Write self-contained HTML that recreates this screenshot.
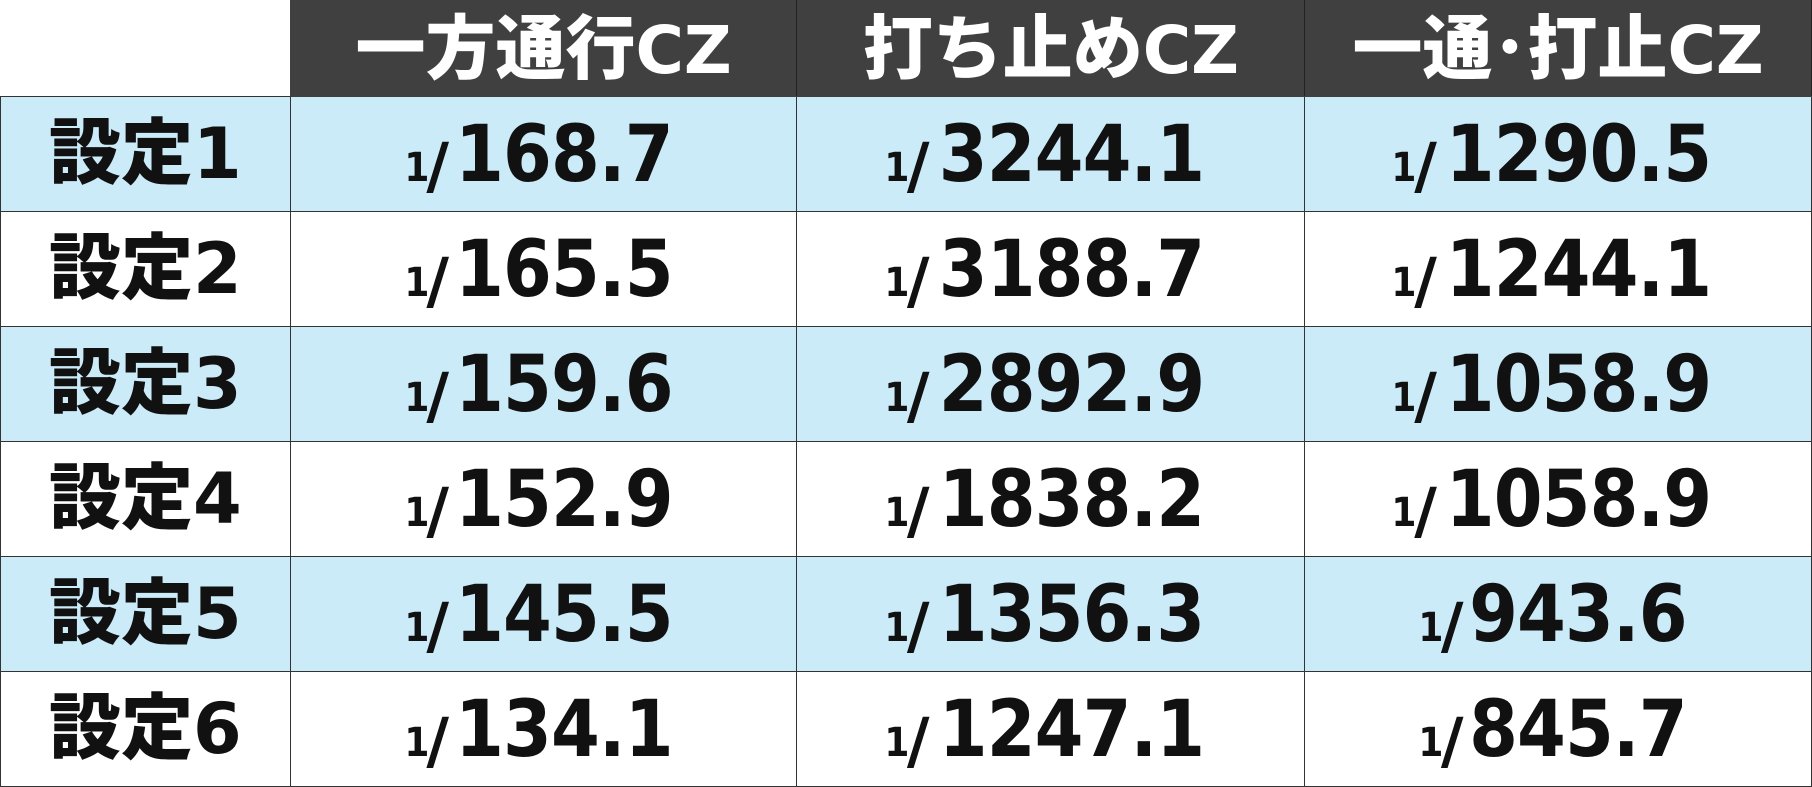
<!DOCTYPE html>
<html><head><meta charset="utf-8"><style>
body{margin:0;width:1812px;height:784px;background:#fff;overflow:hidden}
table{border-collapse:collapse;table-layout:fixed;position:absolute;left:0;top:0}
td{padding:0;text-align:center;vertical-align:middle;border:1px solid #333;line-height:1;overflow:hidden}
.h{background:#404040;color:#fff;font:900 70px/1 "Liberation Sans","Noto Sans CJK JP",sans-serif;height:95px;border-color:#404040;border-right:1px solid #222;white-space:nowrap}
.h b{font-family:"DejaVu Sans",sans-serif;font-weight:bold;font-size:66px}
.l{font:900 72px/1 "Liberation Sans","Noto Sans CJK JP",sans-serif;color:#111;white-space:nowrap}
.l b{font-family:"DejaVu Sans",sans-serif;font-size:70px}
.b td{background:#cbebf9}
.n{font-family:"DejaVu Sans",sans-serif;font-weight:bold;color:#111;white-space:nowrap}
.n div{transform:translateY(1px)}
.n span{display:inline-block;transform:scaleX(0.9);font-size:78px;letter-spacing:-1px;margin-left:-6px}
.n small{font-size:40px;display:inline-block;transform:scaleX(0.9)}
.n i{font-style:normal;font-size:62px;font-weight:bold;margin-left:-4px;display:inline-block;transform:translateY(6px)}
tr.r td{height:114px}
.e{border:none;border-bottom:1px solid #333;background:#fff}
</style></head><body>
<table>
<colgroup><col style="width:290px"><col style="width:507px"><col style="width:508px"><col style="width:507px"></colgroup>
<tr><td class="e" style="height:95px"></td><td class="h">一方通行<b>CZ</b></td><td class="h">打ち止め<b>CZ</b></td><td class="h">一通･打止<b>CZ</b></td></tr>
<tr class="r b"><td class="l">設定<b>1</b></td><td class="n"><div><small>1</small><i>/</i><span>168.7</span></div></td><td class="n"><div><small>1</small><i>/</i><span>3244.1</span></div></td><td class="n"><div><small>1</small><i>/</i><span>1290.5</span></div></td></tr>
<tr class="r"><td class="l">設定<b>2</b></td><td class="n"><div><small>1</small><i>/</i><span>165.5</span></div></td><td class="n"><div><small>1</small><i>/</i><span>3188.7</span></div></td><td class="n"><div><small>1</small><i>/</i><span>1244.1</span></div></td></tr>
<tr class="r b"><td class="l">設定<b>3</b></td><td class="n"><div><small>1</small><i>/</i><span>159.6</span></div></td><td class="n"><div><small>1</small><i>/</i><span>2892.9</span></div></td><td class="n"><div><small>1</small><i>/</i><span>1058.9</span></div></td></tr>
<tr class="r"><td class="l">設定<b>4</b></td><td class="n"><div><small>1</small><i>/</i><span>152.9</span></div></td><td class="n"><div><small>1</small><i>/</i><span>1838.2</span></div></td><td class="n"><div><small>1</small><i>/</i><span>1058.9</span></div></td></tr>
<tr class="r b"><td class="l">設定<b>5</b></td><td class="n"><div><small>1</small><i>/</i><span>145.5</span></div></td><td class="n"><div><small>1</small><i>/</i><span>1356.3</span></div></td><td class="n"><div><small>1</small><i>/</i><span>943.6</span></div></td></tr>
<tr class="r"><td class="l">設定<b>6</b></td><td class="n"><div><small>1</small><i>/</i><span>134.1</span></div></td><td class="n"><div><small>1</small><i>/</i><span>1247.1</span></div></td><td class="n"><div><small>1</small><i>/</i><span>845.7</span></div></td></tr>
</table>
</body></html>
